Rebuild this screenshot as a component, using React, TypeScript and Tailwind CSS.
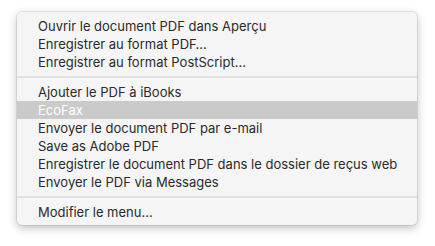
type Item = { label: string; active?: boolean } | 'sep';

const items: Item[] = [
  { label: 'Ouvrir le document PDF dans Aperçu' },
  { label: 'Enregistrer au format PDF…' },
  { label: 'Enregistrer au format PostScript…' },
  'sep',
  { label: 'Ajouter le PDF à iBooks' },
  { label: 'EcoFax', active: true },
  { label: 'Envoyer le document PDF par e-mail' },
  { label: 'Save as Adobe PDF' },
  { label: 'Enregistrer le document PDF dans le dossier de reçus web' },
  { label: 'Envoyer le PDF via Messages' },
  'sep',
  { label: 'Modifier le menu…' },
];

export default function App() {
  return (
    <div className="w-[435px] h-[246px] bg-white pl-[17px] pt-[12px]" style={{ fontFamily: 'Inter, "Liberation Sans", sans-serif' }}>
      <div className="w-[400px] rounded-[5px] bg-[#f5f5f5] pt-[5px] pb-[4px] shadow-[0_3px_10px_rgba(0,0,0,0.25),0_0_0_1px_rgba(0,0,0,0.08)]">
        {items.map((it, i) =>
          it === 'sep' ? (
            <div key={i} className="py-[5px]">
              <div className="h-[2px] bg-[#e3e3e3]" />
            </div>
          ) : (
            <div
              key={i}
              className={`h-[18px] pl-[21px] flex items-center text-[13px] leading-none ${
                it.active ? 'bg-[#cacaca] text-white' : 'text-[#2a2a2a]'
              }`}
            >
              {it.label}
            </div>
          )
        )}
      </div>
    </div>
  );
}
